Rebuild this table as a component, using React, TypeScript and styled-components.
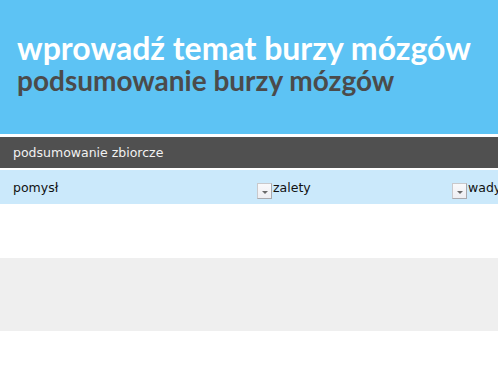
import { createGlobalStyle, styled } from "styled-components"

const GlobalStyle = createGlobalStyle`
  html, body {
    margin: 0;
    padding: 0;
    background: #ffffff;
  }
  body {
    font-family: "DejaVu Sans", Tahoma, sans-serif;
    overflow: hidden;
  }
`

const Sheet = styled.div`
  width: 498px;
  height: 382px;
  display: flex;
  flex-flow: column;
  background: #ffffff;
  overflow: hidden;
  & > * {
    flex-shrink: 0;
  }
`

const Banner = styled.header`
  height: 134px;
  box-sizing: border-box;
  padding: 33px 0 0 17px;
  background: #5dc3f4;
  font-family: Lato, "Open Sans", sans-serif;
  font-weight: 700;
`

const Title = styled.h1`
  margin: 0;
  font-size: 32px;
  line-height: 30px;
  font-weight: 700;
  color: #ffffff;
  white-space: nowrap;
`

const Subtitle = styled.h2`
  margin: 2px 0 0;
  font-size: 28px;
  line-height: 30px;
  font-weight: 700;
  color: #4b4b4b;
  white-space: nowrap;
`

const SectionBar = styled.div`
  margin-top: 3px;
  height: 31px;
  display: flex;
  align-items: center;
  padding-left: 13px;
  background: #505050;
  color: #f2f2f2;
  font-size: 12.5px;
`

const HeaderRow = styled.div`
  margin-top: 2px;
  height: 34px;
  display: grid;
  grid-template-columns: 272px 195px 1fr;
  background: #cbe9fb;
  color: #111111;
  font-size: 12.5px;
`

const HeaderCell = styled.div<{ $pad: number }>`
  position: relative;
  padding: 10px 0 0 ${p => p.$pad}px;
  white-space: nowrap;
  overflow: hidden;
`

const FilterButton = styled.span`
  position: absolute;
  right: 0;
  top: 13px;
  width: 15px;
  height: 16px;
  box-sizing: border-box;
  border: 1px solid #c9c9cc;
  border-right-color: #a9a9ad;
  border-bottom-color: #a9a9ad;
  background: linear-gradient(#f9f9fb, #eeeef2);
  display: flex;
  align-items: flex-end;
  justify-content: center;
  padding-bottom: 4px;
`

const Arrow = styled.span`
  width: 0;
  height: 0;
  border-left: 3px solid transparent;
  border-right: 3px solid transparent;
  border-top: 3px solid #6a6a6a;
`

const DataRow = styled.div<{ $h: number; $shade?: boolean }>`
  height: ${p => p.$h}px;
  background: ${p => (p.$shade ? "#efefef" : "#ffffff")};
`

const columns = [
  { label: "pomysł", pad: 13, filter: true },
  { label: "zalety", pad: 1, filter: true },
  { label: "wady", pad: 1, filter: false },
]

export default function App() {
  return (
    <Sheet>
      <GlobalStyle />
      <Banner>
        <Title>wprowadź temat burzy mózgów</Title>
        <Subtitle>podsumowanie burzy mózgów</Subtitle>
      </Banner>
      <SectionBar>podsumowanie zbiorcze</SectionBar>
      <HeaderRow>
        {columns.map(col => (
          <HeaderCell key={col.label} $pad={col.pad}>
            {col.label}
            {col.filter && (
              <FilterButton>
                <Arrow />
              </FilterButton>
            )}
          </HeaderCell>
        ))}
      </HeaderRow>
      <DataRow $h={54} />
      <DataRow $h={73} $shade />
      <DataRow $h={60} />
    </Sheet>
  )
}
